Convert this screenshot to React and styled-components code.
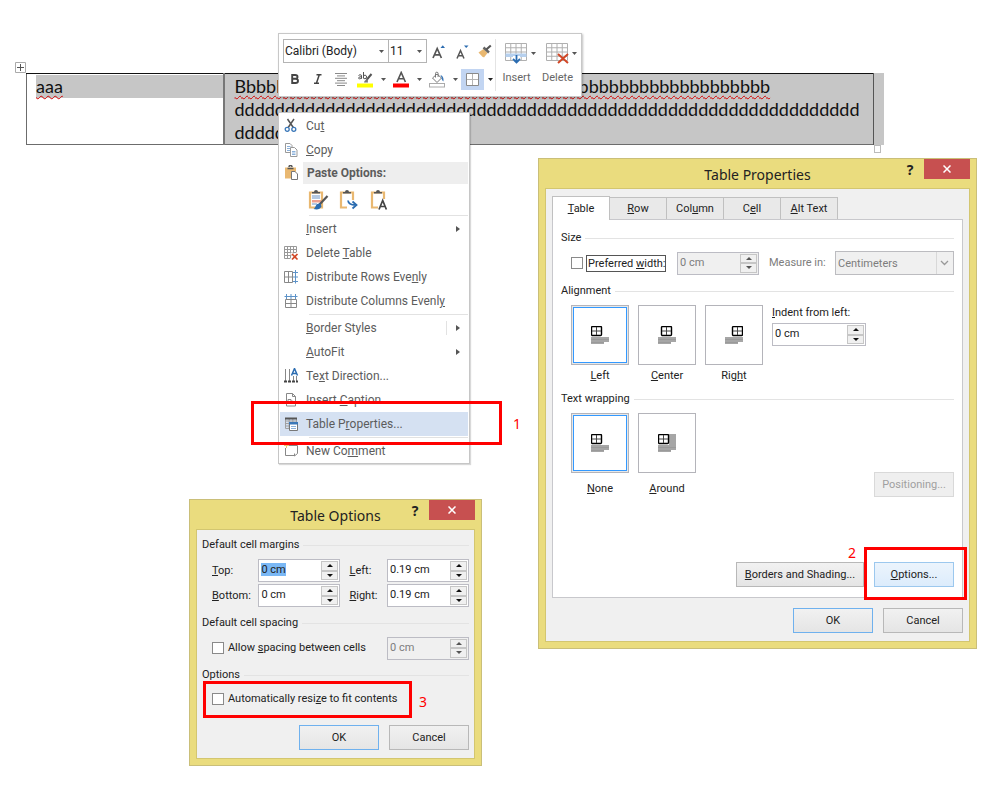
import React from "react";
import styled, { createGlobalStyle, css } from "styled-components";

const GlobalStyle = createGlobalStyle`
  *, *::before, *::after { box-sizing: border-box; }
  body { margin: 0; background: #fff; }
  body, button, input, select { font-family: Roboto, "Open Sans", sans-serif; font-size: 11px; color: #222; }
  button { padding: 0; margin: 0; }
  u { text-underline-offset: 1px; }
`;

const Page = styled.main`
  position: relative;
  min-height: 100vh;
  padding: 73px 126px 0 26px;
  overflow: hidden;
`;

/* ---------- document ---------- */

const DocTable = styled.div`
  position: relative;
`;

const Sheet = styled.table`
  width: 100%;
  table-layout: fixed;
  border-collapse: collapse;
  border: 1px solid #6c6c6c;
  border-top: 1px solid #111;
  font-family: Lato, sans-serif;
  font-size: 18px;
  line-height: 23px;
  color: #111;

  td {
    vertical-align: top;
    padding: 1px 0 0 9px;
    height: 71px;
    white-space: nowrap;
    overflow: hidden;
    border-right: 2px solid #777;
  }
  td:first-child { width: 197px; }
  td:last-child { padding-left: 10px; background: #c6c6c6; border-right: 1px solid #555; }
`;

const SelectedLine = styled.div`
  background: #c6c6c6;
`;

const Misspelled = styled.span`
  text-decoration: underline wavy #d40000 1px;
  text-decoration-skip-ink: none;
  text-underline-offset: 2px;
`;

const RowEndMark = styled.span`
  position: absolute;
  top: 0;
  bottom: 0;
  left: 100%;
  width: 10px;
  background: #c6c6c6;
`;

const MoveHandle = styled.svg`
  position: absolute;
  left: -11px;
  top: -11px;
`;

const ResizeHandle = styled.span`
  position: absolute;
  left: 100%;
  top: 100%;
  width: 7px;
  height: 8px;
  background: #fff;
  border: 1px solid #bbb;
`;

/* ---------- mini toolbar ---------- */

const MiniToolbar = styled.div`
  position: absolute;
  left: 278px;
  top: 33px;
  display: flex;
  width: 304px;
  height: 64px;
  padding: 5px 4px;
  background: #fff;
  border: 1px solid #c8c8c8;
  box-shadow: 1px 1px 2px rgba(0, 0, 0, 0.25);
`;

const FormatGroup = styled.div`
  width: 213px;
  border-right: 1px solid #e4e4e4;
`;

const ToolRow = styled.div`
  display: flex;
  align-items: center;
  height: ${(p) => p.$h}px;
`;

const Combo = styled.span`
  position: relative;
  flex: none;
  width: ${(p) => p.$w}px;
  height: 24px;
  border: 1px solid #b4b4b4;

  & + & { margin-left: -1px; }

  select {
    appearance: none;
    display: block;
    width: 100%;
    height: 22px;
    padding: 0 0 0 1px;
    border: 0;
    background: #fff;
    font-size: 12px;
    line-height: 20px;
  }
  svg { position: absolute; right: 4px; top: 10px; pointer-events: none; }
`;

const ToolButton = styled.button`
  display: flex;
  flex: none;
  align-items: center;
  justify-content: center;
  width: ${(p) => p.$w || 24}px;
  height: 21px;
  border: 0;
  background: ${(p) => (p.$on ? "#c2d5f2" : "transparent")};
`;

const BigTools = styled.div`
  display: flex;
  flex: 1;
`;

const BigTool = styled.button`
  display: flex;
  flex-direction: column;
  align-items: center;
  width: 41px;
  padding-top: 2px;
  border: 0;
  background: transparent;
  color: #666;
  line-height: 14px;

  span { display: flex; align-items: center; gap: 3px; height: 24px; margin: 0 0 6px 8px; }
`;

/* ---------- context menu ---------- */

const ContextMenu = styled.div`
  position: absolute;
  left: 278px;
  top: 112px;
  width: 192px;
  padding: 1px 1px 0;
  background: #fff;
  border: 1px solid #c6c6c6;
  box-shadow: 1px 1px 1px rgba(0, 0, 0, 0.15);
`;

const MenuItem = styled.button`
  display: flex;
  align-items: center;
  width: 100%;
  height: 24px;
  border: 0;
  background: ${(p) => (p.$on ? "#d5e1f2" : "transparent")};
  color: #5c5c5c;
  font-size: 12px;
  line-height: 24px;
  text-align: left;
`;

const IconCell = styled.span`
  display: flex;
  flex: none;
  width: 26px;
  padding-left: 4px;
`;

const MenuLabel = styled.span`
  flex: 1;
  white-space: nowrap;
`;

const ArrowCell = styled.span`
  display: flex;
  align-items: center;
  justify-content: center;
  width: 22px;
  height: 14px;
  border-left: 1px solid ${(p) => (p.$split ? "#e2e2e2" : "transparent")};
`;

const MenuHeader = styled.div`
  display: flex;
  align-items: center;
  height: 22px;
  font-size: 12px;
  font-weight: 700;
  color: #5c5c5c;
`;

const HeaderBand = styled.span`
  flex: 1;
  margin-left: -3px;
  padding-left: 4px;
  line-height: 22px;
  background: #eee;
`;

const PasteRow = styled.div`
  display: flex;
  gap: 8px;
  height: 30px;
  padding: 5px 0 0 27px;

  button { width: 23px; height: 23px; border: 0; background: transparent; }
`;

const MenuRule = styled.hr`
  height: 1px;
  margin: 1px 0 1px 29px;
  border: 0;
  background: #e2e2e2;
`;

/* ---------- dialogs ---------- */

const Window = styled.section`
  position: absolute;
  left: ${(p) => p.$x}px;
  top: ${(p) => p.$y}px;
  width: ${(p) => p.$w}px;
  padding: 0 6px 6px;
  background: #eadc7e;
  border: 1px solid #cabf79;
`;

const TitleBar = styled.header`
  display: flex;
  align-items: flex-start;
  height: 29px;
  padding-left: 70px;
`;

const Title = styled.h2`
  flex: 1;
  margin: 0;
  font-family: "Noto Sans", sans-serif;
  font-size: 14px;
  font-weight: 400;
  line-height: 31px;
  text-align: center;
`;

const HelpButton = styled.button`
  width: 20px;
  height: 21px;
  margin-right: 4px;
  border: 0;
  background: transparent;
  font-family: "Noto Sans", sans-serif;
  font-size: 14px;
  font-weight: 700;
  line-height: 21px;
`;

const CloseButton = styled.button`
  display: flex;
  align-items: center;
  justify-content: center;
  width: 46px;
  height: 20px;
  border: 0;
  background: #c75050;
`;

const WindowBody = styled.div`
  padding: ${(p) => p.$pad};
  background: #f0f0f0;
  border: 1px solid #d3c670;
`;

const Tabs = styled.div`
  display: flex;
  align-items: flex-end;
  height: 23px;
`;

const Tab = styled.button`
  width: ${(p) => (p.$on ? 58 : 57)}px;
  height: ${(p) => (p.$on ? 24 : 22)}px;
  margin-bottom: ${(p) => (p.$on ? -1 : 0)}px;
  border: 1px solid #c0c0c0;
  border-left-width: ${(p) => (p.$on ? 1 : 0)}px;
  border-bottom: 0;
  background: ${(p) => (p.$on ? "#fff" : "#e9e9e9")};
  position: relative;
`;

const TabPanel = styled.div`
  padding: 10px 8px;
  background: #fff;
  border: 1px solid #c8c8cc;
`;

const Heading = styled.h3`
  display: flex;
  align-items: center;
  gap: 4px;
  margin: 0;
  font-size: 11px;
  font-weight: 400;
  line-height: 16px;

  &::after { content: ""; flex: 1; height: 1px; background: #e3e3e3; }
`;

const FieldRow = styled.div`
  display: flex;
  align-items: center;
  height: ${(p) => p.$h || 24}px;
  margin-top: ${(p) => p.$top || 0}px;
  margin-bottom: ${(p) => p.$bottom || 0}px;
  padding-left: 10px;
`;

const Check = styled.input`
  appearance: none;
  width: 12px;
  height: 12px;
  margin: 0 4px 0 0;
  background: #fff;
  border: 1px solid #8a8a8a;
`;

const Label = styled.label`
  width: ${(p) => (p.$w ? p.$w + "px" : "auto")};
  line-height: 16px;
  white-space: nowrap;
  ${(p) => p.$muted && css`color: #7d7d7d;`}
`;

const FocusLabel = styled(Label)`
  width: 80px;
  margin: 0 11px 0 -1px;
  padding: 0 0 0 1px;
  line-height: 15px;
  border: 1px solid #555;
`;

const SpinBox = styled.span`
  display: flex;
  width: ${(p) => p.$w || 82}px;
  height: 23px;
  margin-right: ${(p) => p.$gap || 0}px;
  padding: 1px;
  border: 1px solid #bcbcc4;
  background: ${(p) => (p.$off ? "#f0f0f0" : "#fff")};

  input {
    flex: 1;
    min-width: 0;
    padding: 0 0 2px 1px;
    border: 0;
    outline: 0;
    background: transparent;
    color: ${(p) => (p.$off ? "#7d7d7d" : "#222")};
  }
  input::selection { background: #7ab8f5; color: #222; }
`;

const SpinButtons = styled.span`
  display: flex;
  flex-direction: column;
  width: 17px;

  button {
    display: flex;
    flex: 1;
    align-items: center;
    justify-content: center;
    border: 1px solid #c6c6c6;
    background: #f0f0f0;
  }
`;

const UnitSelect = styled.span`
  position: relative;
  flex: 1;
  height: 24px;

  select {
    appearance: none;
    display: block;
    width: 100%;
    height: 24px;
    padding: 0 0 0 2px;
    border: 1px solid #bcbcc0;
    border-radius: 0;
    background: #f0f0f0;
    color: #7d7d7d;
    opacity: 1;
  }
  svg { position: absolute; right: 1px; top: 1px; pointer-events: none; }
`;

const TileRow = styled.div`
  display: flex;
  align-items: flex-start;
  gap: 9px;
  margin: 6px 0 ${(p) => p.$bottom}px;
  padding-left: 10px;
`;

const Choice = styled.button`
  display: flex;
  flex-direction: column;
  align-items: center;
  gap: ${(p) => p.$gap}px;
  border: 0;
  background: transparent;
  line-height: 16px;
`;

const Tile = styled.span`
  display: flex;
  align-items: center;
  justify-content: center;
  width: 58px;
  height: 60px;
  border: 1px solid #b4b4ba;
  background: #fff;
  box-shadow: ${(p) => (p.$on ? "inset 0 0 0 1px #e8e8e8, inset 0 0 0 2px #3399ff" : "none")};
`;

const IndentField = styled.div`
  display: flex;
  flex-direction: column;
  gap: 2px;
`;

const PushButton = styled.button`
  width: ${(p) => p.$w || 80}px;
  height: 25px;
  border: 1px solid #b8b8b8;
  background: linear-gradient(#f1f1f1, #e5e5e5);
  white-space: nowrap;
  ${(p) => p.$primary && css`border-color: #6fb1ee;`}
  ${(p) => p.$hot && css`border-color: #9cc8ee; background: linear-gradient(#ecf4fc, #dcecfc);`}
  ${(p) => p.$push && css`margin-left: auto; align-self: flex-end;`}
  &:disabled { border-color: #d9d9d9; background: #efefef; color: #a0a0a0; }
`;

const Buttons = styled.div`
  display: flex;
  justify-content: flex-end;
  gap: 10px;
  margin-top: ${(p) => p.$top}px;
`;

/* ---------- callouts ---------- */

const Callout = styled.div`
  position: absolute;
  left: ${(p) => p.$x}px;
  top: ${(p) => p.$y}px;
  width: ${(p) => p.$w}px;
  height: ${(p) => p.$h}px;
  border: 3px solid #f00;
  pointer-events: none;
`;

const CalloutNumber = styled.span`
  position: absolute;
  left: ${(p) => p.$x}px;
  top: ${(p) => p.$y}px;
  color: #f00;
  font-family: "Noto Sans", sans-serif;
  font-size: 14px;
  line-height: 16px;
`;

/* ---------- drawings ---------- */

const Caret = ({ c = "#555" }) => (
  <svg width="5" height="3" viewBox="0 0 5 3"><path d="M0 0h5L2.500 3z" fill={c} /></svg>
);
const SpinArrow = ({ down, off }) => (
  <svg width="6" height="3" viewBox="0 0 6 3">
    <path d={down ? "M0 0h6L3 3z" : "M0 3h6L3 0z"} fill={off ? "#555" : "#111"} />
  </svg>
);
const GridLines = ({ x = 0, y = 0, w, h, cols, rows, c = "#8d8d8d" }) => {
  let d = "";
  for (let i = 0; i <= cols; i++) d += `M${x + (w * i) / cols} ${y}v${h}`;
  for (let i = 0; i <= rows; i++) d += `M${x} ${y + (h * i) / rows}h${w}`;
  return <path d={d} fill="none" stroke={c} />;
};

const GrowIcon = () => (
  <svg width="14" height="15" viewBox="0 0 14 15">
    <path d="M1 14L5.200 4.500 9.400 14M2.600 10.800h5.200" fill="none" stroke="#555" strokeWidth="1.700" />
    <path d="M8.500 4h4.500L10.800 1.300z" fill="#2b6cb0" />
  </svg>
);
const ShrinkIcon = () => (
  <svg width="14" height="15" viewBox="0 0 14 15">
    <path d="M2 14.500L5.500 6.500 9 14.500M3.300 11.800h4.400" fill="none" stroke="#555" strokeWidth="1.500" />
    <path d="M9 1.500h4.500L11.200 4z" fill="#2b6cb0" />
  </svg>
);
const PainterIcon = () => (
  <svg width="14" height="14" viewBox="0 0 14 14">
    <path d="M0.500 8.500l5-3.500 4 4-3.500 4.500-2-1.200z" fill="#e9b871" />
    <path d="M5.500 3.500l5.500 5" stroke="#666" strokeWidth="2.400" />
    <path d="M8.300 5.500L12.800 1.500" stroke="#555" strokeWidth="2.200" />
  </svg>
);
const AlignIcon = () => (
  <svg width="12" height="13" viewBox="0 0 12 13">
    <path d="M0 .5h12M2 2.900h8M0 5.300h12M2 7.700h8M0 10.100h12M2 12.500h8" stroke="#8a8a8a" />
  </svg>
);
const HighlightIcon = () => (
  <svg width="17" height="17" viewBox="0 0 17 17">
    <path d="M1.500 4.500q1.500-1.500 3-.2v3.500M4.500 5.800C1 5.500 1 8 2.500 7.800q1.500 0 2-1M6.500 1v6.500M6.500 5q1.500-2 3 0 .4 2.500-1.500 2.800-1 0-1.500-1" fill="none" stroke="#555" />
    <path d="M14.500 3L9.500 9" stroke="#555" strokeWidth="2" />
    <path d="M10.500 7.500l-3 2.500-.5 1.500h4z" fill="#777" />
    <path d="M0 12.500h16v4H0z" fill="#ff0" />
  </svg>
);
const FontColorIcon = () => (
  <svg width="17" height="17" viewBox="0 0 17 17">
    <path d="M4 11L8.200 1.500 12.400 11M5.500 7.800h5.400" fill="none" stroke="#555" strokeWidth="1.600" />
    <path d="M0 12.500h16v4H0z" fill="#f00" />
  </svg>
);
const BucketIcon = () => (
  <svg width="17" height="17" viewBox="0 0 17 17">
    <path d="M3.500 7l4.500-4 4.500 4-4.500 4.500z" fill="#fff" stroke="#777" />
    <path d="M6.500 6.500V2.500a1.300 1.300 0 0 1 2.600 0V6" fill="none" stroke="#777" />
    <path d="M11.500 4q3.500 1 3 6.500-2-1-2-4z" fill="#3a77b8" />
    <rect x=".5" y="12.500" width="15" height="3.500" fill="#fff" stroke="#aaa" />
  </svg>
);
const BordersIcon = () => (
  <svg width="13" height="13" viewBox="0 0 13 13">
    <path d="M.5.5h12v12H.5z" fill="#fff" stroke="#8a8a8a" />
    <path d="M6.500 1v11M1 6.500h11" stroke="#b4b4b4" />
  </svg>
);
const InsertTableIcon = () => (
  <svg width="23" height="22" viewBox="0 0 23 22">
    <GridLines x={0.5} y={1.5} w={21} h={17} cols={4} rows={4} c="#b0b0b0" />
    <path d="M.5 11.500h21v3.500H.5z" fill="#b6d0ee" />
    <path d="M8 14h7v8H8z" fill="#fff" />
    <path d="M11.500 13v7.500M8 17l3.500 3.500L15 17" fill="none" stroke="#2b6cb0" strokeWidth="1.800" />
  </svg>
);
const DeleteTableIcon = () => (
  <svg width="23" height="22" viewBox="0 0 23 22">
    <GridLines x={0.5} y={1.5} w={21} h={17} cols={4} rows={4} c="#b0b0b0" />
    <path d="M12 12l10 9M22 12L12 21" stroke="#d24726" strokeWidth="2" />
  </svg>
);

const Icon16 = (props) => <svg width="16" height="16" viewBox="0 0 16 16" fill="none" {...props} />;
const icons = {
  cut: (
    <Icon16>
      <path d="M3.500 1l5.800 8.500M10 1L4.200 9.500" stroke="#555" strokeWidth="1.500" />
      <circle cx="3.200" cy="11.300" r="2" stroke="#3a77b8" strokeWidth="1.300" />
      <circle cx="9.800" cy="11.300" r="2" stroke="#3a77b8" strokeWidth="1.300" />
    </Icon16>
  ),
  copy: (
    <Icon16>
      <path d="M1.500 1.500H6L8 3.500v7H1.500z" fill="#fff" stroke="#999" />
      <path d="M3 4.500h3.500M3 6.500h3.500M3 8.500h3" stroke="#8ab0da" />
      <path d="M6.500 5.500h4L13 8v6.500H6.500z" fill="#fff" stroke="#999" />
      <path d="M8 9.500h3.500M8 11h3.500M8 12.500h3.500" stroke="#8ab0da" />
    </Icon16>
  ),
  paste: (
    <Icon16>
      <path d="M1 2.500h11v11H1z" fill="#e9b871" />
      <path d="M3.500 3.500h6M5 2a1.500 1.500 0 0 1 3 0" stroke="#555" strokeWidth="1.500" />
      <path d="M7.500 6.500h3.500L13.500 9v5.500h-6z" fill="#fff" stroke="#777" />
    </Icon16>
  ),
  del: (
    <Icon16>
      <GridLines x={0.5} y={1.5} w={12} h={12} cols={4} rows={4} c="#999" />
      <path d="M7 8l7 7M14 8l-7 7" stroke="#fff" strokeWidth="3" />
      <path d="M8 9l5.500 5.500M13.500 9L8 14.500" stroke="#d24726" strokeWidth="1.700" />
    </Icon16>
  ),
  rows: (
    <Icon16>
      <path d="M.5 2.500h8v11h-8zM4.500 2.500v11M.5 8h8" stroke="#888" />
      <path d="M11.500 1v13.500M9 3.500h5M9 12.500h5M9 8h5" stroke="#5d93c9" />
    </Icon16>
  ),
  cols: (
    <Icon16>
      <path d="M1.500 6.500h11v8h-11zM7 6.500v8M1.500 10.500h11" stroke="#888" />
      <path d="M.5 3.500h13M2.500 1v5M11.500 1v5M7 1v5" stroke="#5d93c9" />
    </Icon16>
  ),
  dir: (
    <Icon16>
      <path d="M1.500 1v12M5.500 1v12M9.500 8v5M12.500 8v5" stroke="#888" />
      <path d="M0 13.500h14" stroke="#444" strokeWidth="2" strokeDasharray="3 1" />
      <path d="M7.500 7.500l3-7 3 7M8.500 5.500h4" stroke="#2b6cb0" strokeWidth="1.500" />
    </Icon16>
  ),
  caption: (
    <Icon16>
      <path d="M2.500 1.500h6l3 3v9.500h-9z" fill="#fff" stroke="#888" />
      <path d="M8.500 1.500v3h3M4 7.500h3v4H4zM8 8.500v3" stroke="#888" />
    </Icon16>
  ),
  props: (
    <Icon16>
      <GridLines x={1.5} y={2.5} w={11} h={10} cols={3} rows={4} c="#a0a0a0" />
      <path d="M1 1.500h12v2H1z" fill="#555" />
      <path d="M5.500 6.500h8v8h-8z" fill="#fff" stroke="#777" />
      <path d="M5 6h9v2.500H5z" fill="#3a77b8" />
      <path d="M7 10.500h5M7 12.500h5" stroke="#8ab0da" />
    </Icon16>
  ),
  comment: (
    <Icon16>
      <path d="M5 2.500h8.500v8l-3 2.500v-2.500M10.500 12.500h-9V5" stroke="#888" />
      <path d="M2.500 0v5M0 2.500h5" stroke="#e9c871" />
    </Icon16>
  ),
};

const Clipboard = ({ children }) => (
  <svg width="23" height="23" viewBox="0 0 23 23" fill="none">
    <path d="M3 3.500h12v15H3z" stroke="#e9b871" strokeWidth="2.200" fill="#fff" />
    <path d="M5 4.500h8V3h-2a2 2 0 0 0-4 0H5z" fill="#555" />
    {children}
  </svg>
);
const PasteKeep = () => (
  <Clipboard>
    <path d="M5 7h8M5 9h8M5 15h5" stroke="#6a93c5" />
    <path d="M5 11h9v2.500H5z" fill="#f0a090" />
    <path d="M20.500 7L12.500 15.500" stroke="#555" strokeWidth="2.200" />
    <path d="M13.500 14.500q-4-.5-5 3-1 2-2 2.500 6 1.500 8-2.500z" fill="#2b6cb0" />
  </Clipboard>
);
const PasteMerge = () => (
  <Clipboard>
    <path d="M9 11h10v10H9z" fill="#fff" />
    <path d="M10 11.500q.5 4.500 7.500 4.500M14.500 12.500l4 3.500-4 3.500" stroke="#2b6cb0" strokeWidth="1.800" />
  </Clipboard>
);
const PasteText = () => (
  <Clipboard>
    <path d="M9 10h10v11H9z" fill="#fff" />
    <path d="M10 20.500l3.700-9 3.700 9M11.500 17.500h4.500" stroke="#444" strokeWidth="1.700" />
  </Clipboard>
);

/* table glyph over text lines, shifted by dx; "wrap" runs text beside it */
const TileGlyph = ({ dx = 0, wrap }) => (
  <svg width="18" height="18" viewBox="0 0 18 18" fill="none">
    {wrap && <path d="M11 0h7v11h-7z" fill="#a6a6a6" />}
    <path d="M0 11h18v5h-5v2H0z" fill="#a6a6a6" />
    <path d="M0 13.500h18M0 16.500h13" stroke="#9a9a9a" />
    <g transform={`translate(${dx} 0)`}>
      <rect x=".5" y=".5" width="10" height="9" rx="1" fill="#fff" stroke="#000" strokeWidth="1.400" />
      <path d="M5.500 1v8M1 5h9" stroke="#444" />
    </g>
  </svg>
);

/* ---------- composed controls ---------- */

function Spinner({ id, value, label, disabled, w, gap, selected }) {
  const ref = React.useRef(null);
  React.useEffect(() => {
    if (selected) ref.current.select();
  }, [selected]);
  return (
    <SpinBox $w={w} $gap={gap} $off={disabled}>
      <input id={id} ref={ref} aria-label={label} defaultValue={value} disabled={disabled} />
      <SpinButtons>
        <button disabled={disabled} aria-label="Increase"><SpinArrow off={disabled} /></button>
        <button disabled={disabled} aria-label="Decrease"><SpinArrow down off={disabled} /></button>
      </SpinButtons>
    </SpinBox>
  );
}

function Dialog({ x, y, w, title, pad, children }) {
  return (
    <Window $x={x} $y={y} $w={w} aria-label={title}>
      <TitleBar>
        <Title>{title}</Title>
        <HelpButton aria-label="Help">?</HelpButton>
        <CloseButton aria-label="Close">
          <svg width="8" height="8" viewBox="0 0 8 8"><path d="M.5.5l7 7M7.500.5l-7 7" stroke="#fff" strokeWidth="1.500" /></svg>
        </CloseButton>
      </TitleBar>
      <WindowBody $pad={pad}>{children}</WindowBody>
    </Window>
  );
}

function Item({ icon, children, on, arrow, split }) {
  return (
    <MenuItem $on={on} role="menuitem">
      <IconCell>{icon && icons[icon]}</IconCell>
      <MenuLabel>{children}</MenuLabel>
      {arrow && (
        <ArrowCell $split={split}>
          <svg width="4" height="6" viewBox="0 0 4 6"><path d="M0 0l4 3-4 3z" fill="#555" /></svg>
        </ArrowCell>
      )}
    </MenuItem>
  );
}

function TileChoice({ on, dx, wrap, gap, children }) {
  return (
    <Choice $gap={gap} aria-pressed={!!on}>
      <Tile $on={on}><TileGlyph dx={dx} wrap={wrap} /></Tile>
      <span>{children}</span>
    </Choice>
  );
}

export default function App() {
  return (
    <Page>
      <GlobalStyle />

      <DocTable>
        <Sheet>
          <tbody>
            <tr>
              <td><SelectedLine><Misspelled>aaa</Misspelled></SelectedLine></td>
              <td>
                <Misspelled>{"B" + "b".repeat(52)}</Misspelled><br />
                {"d".repeat(62)}<br />
                {"d".repeat(15)}
              </td>
            </tr>
          </tbody>
        </Sheet>
        <RowEndMark />
        <ResizeHandle />
        <MoveHandle width="11" height="11" viewBox="0 0 11 11">
          <path d="M.5.5h10v10H.5z" fill="#fff" stroke="#aaa" />
          <path d="M5.500 2v7M2 5.500h7" stroke="#555" />
        </MoveHandle>
      </DocTable>

      <MiniToolbar role="toolbar">
        <FormatGroup>
          <ToolRow $h={24}>
            <Combo $w={106}>
              <select aria-label="Font"><option>Calibri (Body)</option></select>
              <Caret />
            </Combo>
            <Combo $w={39}>
              <select aria-label="Font size"><option>11</option></select>
              <Caret />
            </Combo>
            <ToolButton $w={23} aria-label="Grow font"><GrowIcon /></ToolButton>
            <ToolButton $w={23} aria-label="Shrink font"><ShrinkIcon /></ToolButton>
            <ToolButton $w={23} aria-label="Format painter"><PainterIcon /></ToolButton>
          </ToolRow>
          <ToolRow $h={32}>
            <ToolButton $w={23} aria-label="Bold">
              <svg width="10" height="10" viewBox="0 0 10 10" fill="none"><path d="M2.200 1h3q2.300 0 2.300 1.900T5.200 4.800h-3 3.300Q8 4.800 8 6.900T5.500 9H2.200z" stroke="#444" strokeWidth="1.900" /></svg>
            </ToolButton>
            <ToolButton $w={23} aria-label="Italic">
              <svg width="10" height="10" viewBox="0 0 10 10" fill="none"><path d="M3.500.7h5M1 9.300h5M6.200 1L3.500 9" stroke="#444" strokeWidth="1.500" /></svg>
            </ToolButton>
            <ToolButton aria-label="Center"><AlignIcon /></ToolButton>
            <ToolButton aria-label="Highlight"><HighlightIcon /></ToolButton>
            <ToolButton $w={12} aria-label="Highlight colors"><Caret /></ToolButton>
            <ToolButton aria-label="Font color"><FontColorIcon /></ToolButton>
            <ToolButton $w={12} aria-label="Font colors"><Caret /></ToolButton>
            <ToolButton aria-label="Shading"><BucketIcon /></ToolButton>
            <ToolButton $w={12} aria-label="Shading colors"><Caret /></ToolButton>
            <ToolButton $w={23} $on aria-label="Borders"><BordersIcon /></ToolButton>
            <ToolButton $w={12} aria-label="Border options"><Caret c="#222" /></ToolButton>
          </ToolRow>
        </FormatGroup>
        <BigTools>
          <BigTool><span><InsertTableIcon /><Caret /></span>Insert</BigTool>
          <BigTool><span><DeleteTableIcon /><Caret /></span>Delete</BigTool>
        </BigTools>
      </MiniToolbar>

      <ContextMenu role="menu">
        <Item icon="cut">Cu<u>t</u></Item>
        <Item icon="copy"><u>C</u>opy</Item>
        <MenuHeader><IconCell>{icons.paste}</IconCell><HeaderBand>Paste Options:</HeaderBand></MenuHeader>
        <PasteRow>
          <button aria-label="Keep source formatting"><PasteKeep /></button>
          <button aria-label="Merge formatting"><PasteMerge /></button>
          <button aria-label="Keep text only"><PasteText /></button>
        </PasteRow>
        <MenuRule />
        <Item arrow><u>I</u>nsert</Item>
        <Item icon="del">Delete <u>T</u>able</Item>
        <Item icon="rows">Distribute Rows Eve<u>n</u>ly</Item>
        <Item icon="cols">Distribute Columns Evenl<u>y</u></Item>
        <MenuRule />
        <Item arrow split><u>B</u>order Styles</Item>
        <Item arrow><u>A</u>utoFit</Item>
        <Item icon="dir">Te<u>x</u>t Direction...</Item>
        <Item icon="caption">Insert <u>C</u>aption...</Item>
        <Item icon="props" on>Table P<u>r</u>operties...</Item>
        <MenuRule />
        <Item icon="comment">New Co<u>m</u>ment</Item>
      </ContextMenu>

      <Dialog x={538} y={158} w={439} title="Table Properties" pad="7px 6px 8px">
        <Tabs role="tablist">
          <Tab $on role="tab" aria-selected="true"><u>T</u>able</Tab>
          <Tab role="tab"><u>R</u>ow</Tab>
          <Tab role="tab">Col<u>u</u>mn</Tab>
          <Tab role="tab">C<u>e</u>ll</Tab>
          <Tab role="tab"><u>A</u>lt Text</Tab>
        </Tabs>
        <TabPanel role="tabpanel">
          <Heading>Size</Heading>
          <FieldRow $top={5} $bottom={8}>
            <Check type="checkbox" id="prefer" />
            <FocusLabel htmlFor="prefer">Preferred <u>w</u>idth:</FocusLabel>
            <Spinner value="0 cm" label="Preferred width" disabled gap={10} />
            <Label htmlFor="unit" $muted $w={66}>Measure in:</Label>
            <UnitSelect>
              <select id="unit" disabled><option>Centimeters</option></select>
              <svg width="17" height="22" viewBox="0 0 17 22" fill="none">
                <path d="M.5 0v22" stroke="#d8d8d8" />
                <path d="M5 9l3.500 3.500L12 9" stroke="#999" strokeWidth="1.300" />
              </svg>
            </UnitSelect>
          </FieldRow>
          <Heading>Alignment</Heading>
          <TileRow $bottom={7}>
            <TileChoice on gap={3}><u>L</u>eft</TileChoice>
            <TileChoice dx={3} gap={3}><u>C</u>enter</TileChoice>
            <TileChoice dx={7} gap={3}>Rig<u>h</u>t</TileChoice>
            <IndentField>
              <Label htmlFor="indent"><u>I</u>ndent from left:</Label>
              <Spinner id="indent" value="0 cm" w={94} />
            </IndentField>
          </TileRow>
          <Heading>Text wrapping</Heading>
          <TileRow $bottom={0}>
            <TileChoice on gap={8}><u>N</u>one</TileChoice>
            <TileChoice wrap gap={8}><u>A</u>round</TileChoice>
            <PushButton disabled $push>Positioning...</PushButton>
          </TileRow>
          <Buttons $top={65}>
            <PushButton $w={128}><u>B</u>orders and Shading...</PushButton>
            <PushButton $hot><u>O</u>ptions...</PushButton>
          </Buttons>
        </TabPanel>
        <Buttons $top={10}>
          <PushButton $primary>OK</PushButton>
          <PushButton>Cancel</PushButton>
        </Buttons>
      </Dialog>

      <Dialog x={189} y={499} w={293} title="Table Options" pad="7px 5px 8px">
        <Heading>Default cell margins</Heading>
        <FieldRow $top={5} $h={25}>
          <Label htmlFor="top" $w={47}><u>T</u>op:</Label>
          <Spinner id="top" value="0 cm" gap={9} selected />
          <Label htmlFor="left" $w={38}><u>L</u>eft:</Label>
          <Spinner id="left" value="0.19 cm" />
        </FieldRow>
        <FieldRow $bottom={7} $h={25}>
          <Label htmlFor="bottom" $w={47}><u>B</u>ottom:</Label>
          <Spinner id="bottom" value="0 cm" gap={9} />
          <Label htmlFor="right" $w={38}><u>R</u>ight:</Label>
          <Spinner id="right" value="0.19 cm" />
        </FieldRow>
        <Heading>Default cell spacing</Heading>
        <FieldRow $top={5} $bottom={7}>
          <Check type="checkbox" id="allow" />
          <Label htmlFor="allow" $w={160}>Allow <u>s</u>pacing between cells</Label>
          <Spinner value="0 cm" label="Cell spacing" disabled />
        </FieldRow>
        <Heading>Options</Heading>
        <FieldRow $top={4}>
          <Check type="checkbox" id="auto" />
          <Label htmlFor="auto">Automatically resi<u>z</u>e to fit contents</Label>
        </FieldRow>
        <Buttons $top={14}>
          <PushButton $primary>OK</PushButton>
          <PushButton>Cancel</PushButton>
        </Buttons>
      </Dialog>

      <Callout $x={251} $y={401} $w={251} $h={44} />
      <CalloutNumber $x={513} $y={416}>1</CalloutNumber>
      <Callout $x={864} $y={547} $w={103} $h={53} />
      <CalloutNumber $x={848} $y={545}>2</CalloutNumber>
      <Callout $x={203} $y={681} $w={209} $h={37} />
      <CalloutNumber $x={419} $y={694}>3</CalloutNumber>
    </Page>
  );
}
